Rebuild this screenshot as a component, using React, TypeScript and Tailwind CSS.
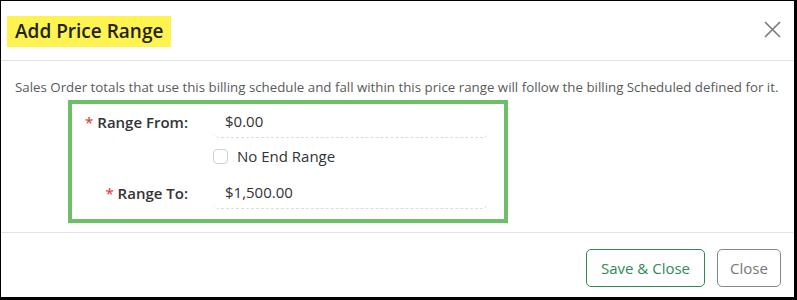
const font = { fontFamily: '"Open Sans", "Noto Sans", sans-serif' };

const FieldRow = ({ label, value }: { label: string; value: string }) => (
  <div className="flex items-center">
    <div className="w-[116px] text-right text-[15px] font-semibold text-[#333] whitespace-nowrap">
      <span className="text-[#e0484f] mr-[4px]">*</span>
      {label}
    </div>
    <div className="ml-[25px] w-[275px] h-[32px] flex items-center pl-[12px] text-[15px] text-[#333] border-b border-dashed border-[#dcdcdc] rounded-b-[6px]">
      {value}
    </div>
  </div>
);

export default function App() {
  return (
    <div
      style={font}
      className="w-[797px] h-[300px] bg-white border-t border-l border-black border-r-[3px] border-b-[3px] flex flex-col"
    >
      <div className="h-[60px] shrink-0 flex items-center justify-between pl-[6px] pr-[13px] border-b border-[#e3e3e3]">
        <span className="bg-[#fff350] h-[31px] px-[8px] flex items-center text-[19px] font-semibold text-[#222] mt-[2px]">
          Add Price Range
        </span>
        <svg width="17" height="17" viewBox="0 0 17 17" className="-mt-[2px]">
          <path d="M1 1L16 16M16 1L1 16" stroke="#7a7a7a" strokeWidth="1.6" />
        </svg>
      </div>

      <div className="flex-1 px-[14px] pt-[17px]">
        <p className="text-[13.3px] leading-[18px] text-[#5a5a5a] whitespace-nowrap">
          Sales Order totals that use this billing schedule and fall within this price range will follow the billing
          Scheduled defined for it.
        </p>
        <div className="mt-[4px] ml-[53px] w-[440px] h-[123px] border-[4px] border-[#6dbf67] pt-[2px]">
          <FieldRow label="Range From:" value="$0.00" />
          <div className="flex items-center mt-[11px] ml-[141px]">
            <span className="w-[15px] h-[15px] rounded-[4px] border border-[#d0d0d0] bg-white" />
            <span className="ml-[9px] text-[15px] text-[#333] leading-[15px]">No End Range</span>
          </div>
          <div className="mt-[13px]">
            <FieldRow label="Range To:" value="$1,500.00" />
          </div>
        </div>
      </div>

      <div className="h-[65px] shrink-0 border-t border-[#e3e3e3] flex justify-end items-start pt-[16px] pr-[13px] gap-[12px]">
        <button className="h-[38px] w-[119px] rounded-[5px] border border-[#2e8b57] text-[#2e8b57] text-[15px] bg-white">
          Save &amp; Close
        </button>
        <button className="h-[38px] w-[64px] rounded-[5px] border border-[#868686] text-[#777] text-[15px] bg-white">
          Close
        </button>
      </div>
    </div>
  );
}
